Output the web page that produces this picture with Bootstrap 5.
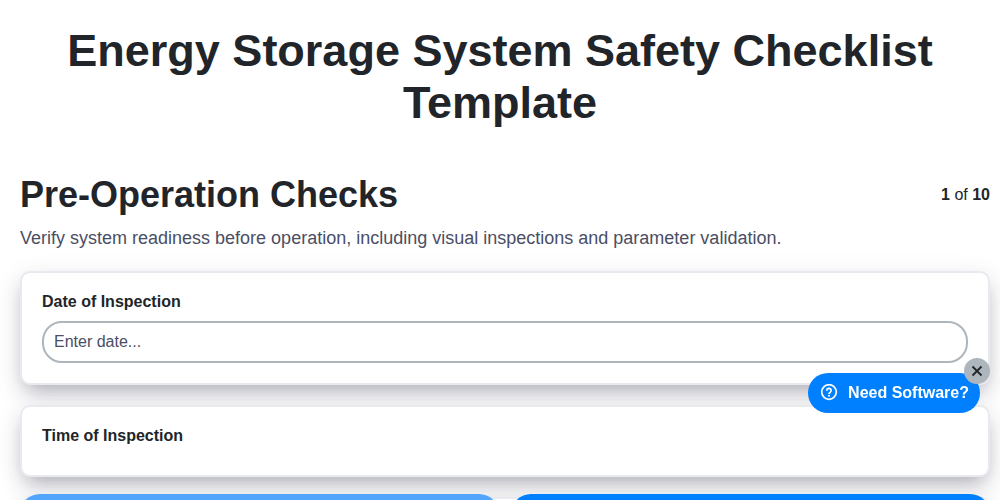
<!DOCTYPE html>
<html lang="en">
<head>
<meta charset="utf-8">
<meta name="viewport" content="width=device-width, initial-scale=1">
<title>Energy Storage System Safety Checklist Template</title>
<link href="https://cdn.jsdelivr.net/npm/bootstrap@5.3.0/dist/css/bootstrap.min.css" rel="stylesheet">
<style>
body { font-family: "Liberation Sans", Arial, sans-serif; color: #212529; overflow: hidden; }
.page-title { font-size: 45px; line-height: 52px; padding: 25px 20px 44px; }
.page { padding: 0 10px 0 20px; }
.section-title { font-size: 36px; line-height: 44px; }
.section-text { font-size: 18px; line-height: 26px; color: #4a4e64; margin: 8px 0 20px; }
.questions { gap: 20px; }
.question { border: 2px solid #e9e9f0; border-radius: 10px; padding: 20px; background: #fff;
  box-shadow: rgba(50, 50, 93, .1) 0 7px 29px 0, rgba(50, 50, 70, .38) 0 10px 20px -6px; }
.question-label { display: block; line-height: 18px; margin-bottom: 10px; }
.date-input { height: 42px; border: 2px solid #adb5bd; border-radius: 20px; padding: 0 10px; }
.date-input::placeholder { color: #4a4e64; }
.pager { height: 6px; overflow: hidden; padding: 0 10px 0 20px; }
.pager-row { gap: 12px; }
.pager-btn { height: 40px; border: 0; border-radius: 20px; background: #0080ff; }
.pager-btn:disabled { background: #52a5fb; opacity: 1; }
.help { right: 20px; bottom: 87px; z-index: 1040; }
.help-btn { height: 40px; border: 0; border-radius: 20px; background: #0080ff; padding: 0 11px 0 12px; gap: 10px; }
.help-close { width: 26px; height: 26px; right: -10px; top: -15px; border: 0; border-radius: 50%; background: #adb5bd; color: #212529; }
</style>
</head>
<body>
<h1 class="page-title text-center fw-bold m-0">Energy Storage System Safety Checklist Template</h1>
<main class="page">
  <header class="d-flex justify-content-between align-items-center">
    <h2 class="section-title fw-bold m-0">Pre-Operation Checks</h2>
    <div><b>1</b> of <b>10</b></div>
  </header>
  <p class="section-text">Verify system readiness before operation, including visual inspections and parameter validation.</p>
  <form class="questions d-grid">
    <div class="question">
      <label class="question-label fw-bold" for="date">Date of Inspection</label>
      <input class="date-input form-control" id="date" type="text" placeholder="Enter date...">
    </div>
    <section class="question">
      <h3 class="question-label fs-6 fw-bold">Time of Inspection</h3>
    </section>
    <section class="question"></section>
  </form>
</main>
<nav class="pager fixed-bottom" aria-label="Steps">
  <div class="pager-row d-flex">
    <button class="pager-btn btn flex-fill" type="button" aria-label="Previous" disabled></button>
    <button class="pager-btn btn flex-fill" type="button" aria-label="Next"></button>
  </div>
</nav>
<div class="help position-fixed">
  <button class="help-btn btn btn-primary fw-bold d-flex align-items-center" type="button">
    <svg width="18" height="18" viewBox="0 0 18 18" fill="none" stroke="currentColor" stroke-width="1.7" aria-hidden="true">
      <circle cx="9" cy="8" r="7.3"/>
      <path d="M6.8 6.7a2.2 2.2 0 1 1 3.4 1.7C9.4 8.9 9 9.1 9 10" stroke-width="1.7"/>
      <circle cx="9" cy="11.8" r="1" fill="currentColor" stroke="none"/>
    </svg>
    <span>Need Software?</span>
  </button>
  <button class="help-close position-absolute p-0 d-flex align-items-center justify-content-center" type="button" aria-label="Close">
    <svg width="12" height="12" viewBox="0 0 12 12" stroke="currentColor" stroke-width="1.8" aria-hidden="true"><path d="M1.5 1.5l9 9M10.5 1.5l-9 9"/></svg>
  </button>
</div>
<script src="https://cdn.jsdelivr.net/npm/bootstrap@5.3.0/dist/js/bootstrap.bundle.min.js"></script>
</body>
</html>
